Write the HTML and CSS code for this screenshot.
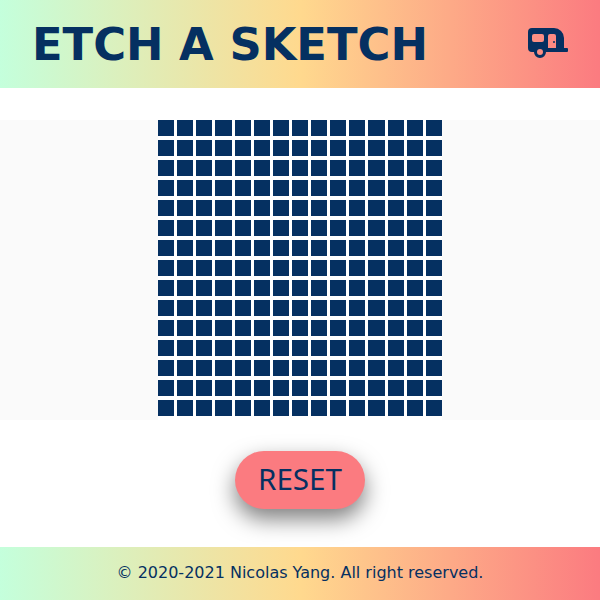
FILE: index.html
```html
<!DOCTYPE html>
<html lang="en">
<head>
    <meta charset="UTF-8">
    <meta name="viewport" content="width=device-width, initial-scale=1.0">
    <title>Etch A Sketch</title>
    <link rel="stylesheet" href="styles.css">
</head>
<body>
    <header class="header">
        <h1 class="title">ETCH A SKETCH</h1>
        <svg class="logo" viewBox="0 0 640 512" aria-hidden="true">
            <path d="M416,208a16,16,0,1,0,16,16A16,16,0,0,0,416,208ZM624,320H576V160A160,160,0,0,0,416,0H64A64,64,0,0,0,0,64V320a64,64,0,0,0,64,64H96a96,96,0,0,0,192,0H624a16,16,0,0,0,16-16V336A16,16,0,0,0,624,320ZM192,432a48,48,0,1,1,48-48A48.05,48.05,0,0,1,192,432Zm64-240a32,32,0,0,1-32,32H96a32,32,0,0,1-32-32V128A32,32,0,0,1,96,96H224a32,32,0,0,1,32,32ZM448,320H320V128a32,32,0,0,1,32-32h64a32,32,0,0,1,32,32Z"/>
        </svg>
    </header>
    <main class="board">
        <div class="grid" id="grid"></div>
    </main>
    <div class="actions">
        <button class="reset" id="reset">RESET</button>
    </div>
    <footer class="footer">© 2020-2021 Nicolas Yang. All right reserved.</footer>
    <script src="script.js"></script>
</body>
</html>
```

FILE: styles.css
```css
* {
    box-sizing: border-box;
}
body {
    margin: 0;
    height: 600px;
    overflow: hidden;
    font-family: "DejaVu Sans", sans-serif;
    color: #053061;
    background-color: white;
    display: flex;
    flex-direction: column;
}
.header {
    height: 88px;
    padding: 0 32px;
    display: flex;
    align-items: center;
    justify-content: space-between;
    background: linear-gradient(90deg, #c4ffdc, #ffd98e 50%, #fb7b80);
}
.title {
    margin: 0;
    font-size: 44.8px;
    font-weight: bold;
}
.logo {
    width: 40px;
    height: 32px;
    fill: #053061;
}
.board {
    margin-top: 32px;
    height: 300px;
    background-color: #fafafa;
    display: flex;
    justify-content: center;
}
.grid {
    width: 284px;
    height: 300px;
    padding-bottom: 4px;
    background-color: white;
    display: grid;
    grid-template-columns: repeat(15, 1fr);
    grid-template-rows: repeat(15, 16px);
    column-gap: 3px;
    row-gap: 4px;
}
.cell {
    background-color: #053061;
}
.actions {
    height: 127px;
    padding-top: 31px;
    display: flex;
    align-items: flex-start;
    justify-content: center;
}
.reset {
    width: 130px;
    height: 58px;
    padding: 0 0 3px;
    border: none;
    border-radius: 29px;
    background-color: #fb7b80;
    color: #053061;
    font-family: "Noto Sans", sans-serif;
    font-size: 29.6px;
    box-shadow: 0px 10px 22px rgba(0, 0, 0, 0.5);
    cursor: pointer;
}
.footer {
    height: 53px;
    padding-bottom: 3px;
    display: flex;
    align-items: center;
    justify-content: center;
    font-size: 16px;
    background: linear-gradient(90deg, #c4ffdc, #ffd98e 50%, #fb7b80);
}
```

FILE: script.js
```js
const grid = document.getElementById("grid");

for (let i = 0; i < 225; i++) {
    const cell = document.createElement("div");
    cell.className = "cell";
    cell.addEventListener("mouseover", () => {
        cell.style.backgroundColor = "#fb7b80";
    });
    grid.appendChild(cell);
}

document.getElementById("reset").addEventListener("click", () => {
    document.querySelectorAll(".cell").forEach(cell => {
        cell.style.backgroundColor = "";
    });
});
```
